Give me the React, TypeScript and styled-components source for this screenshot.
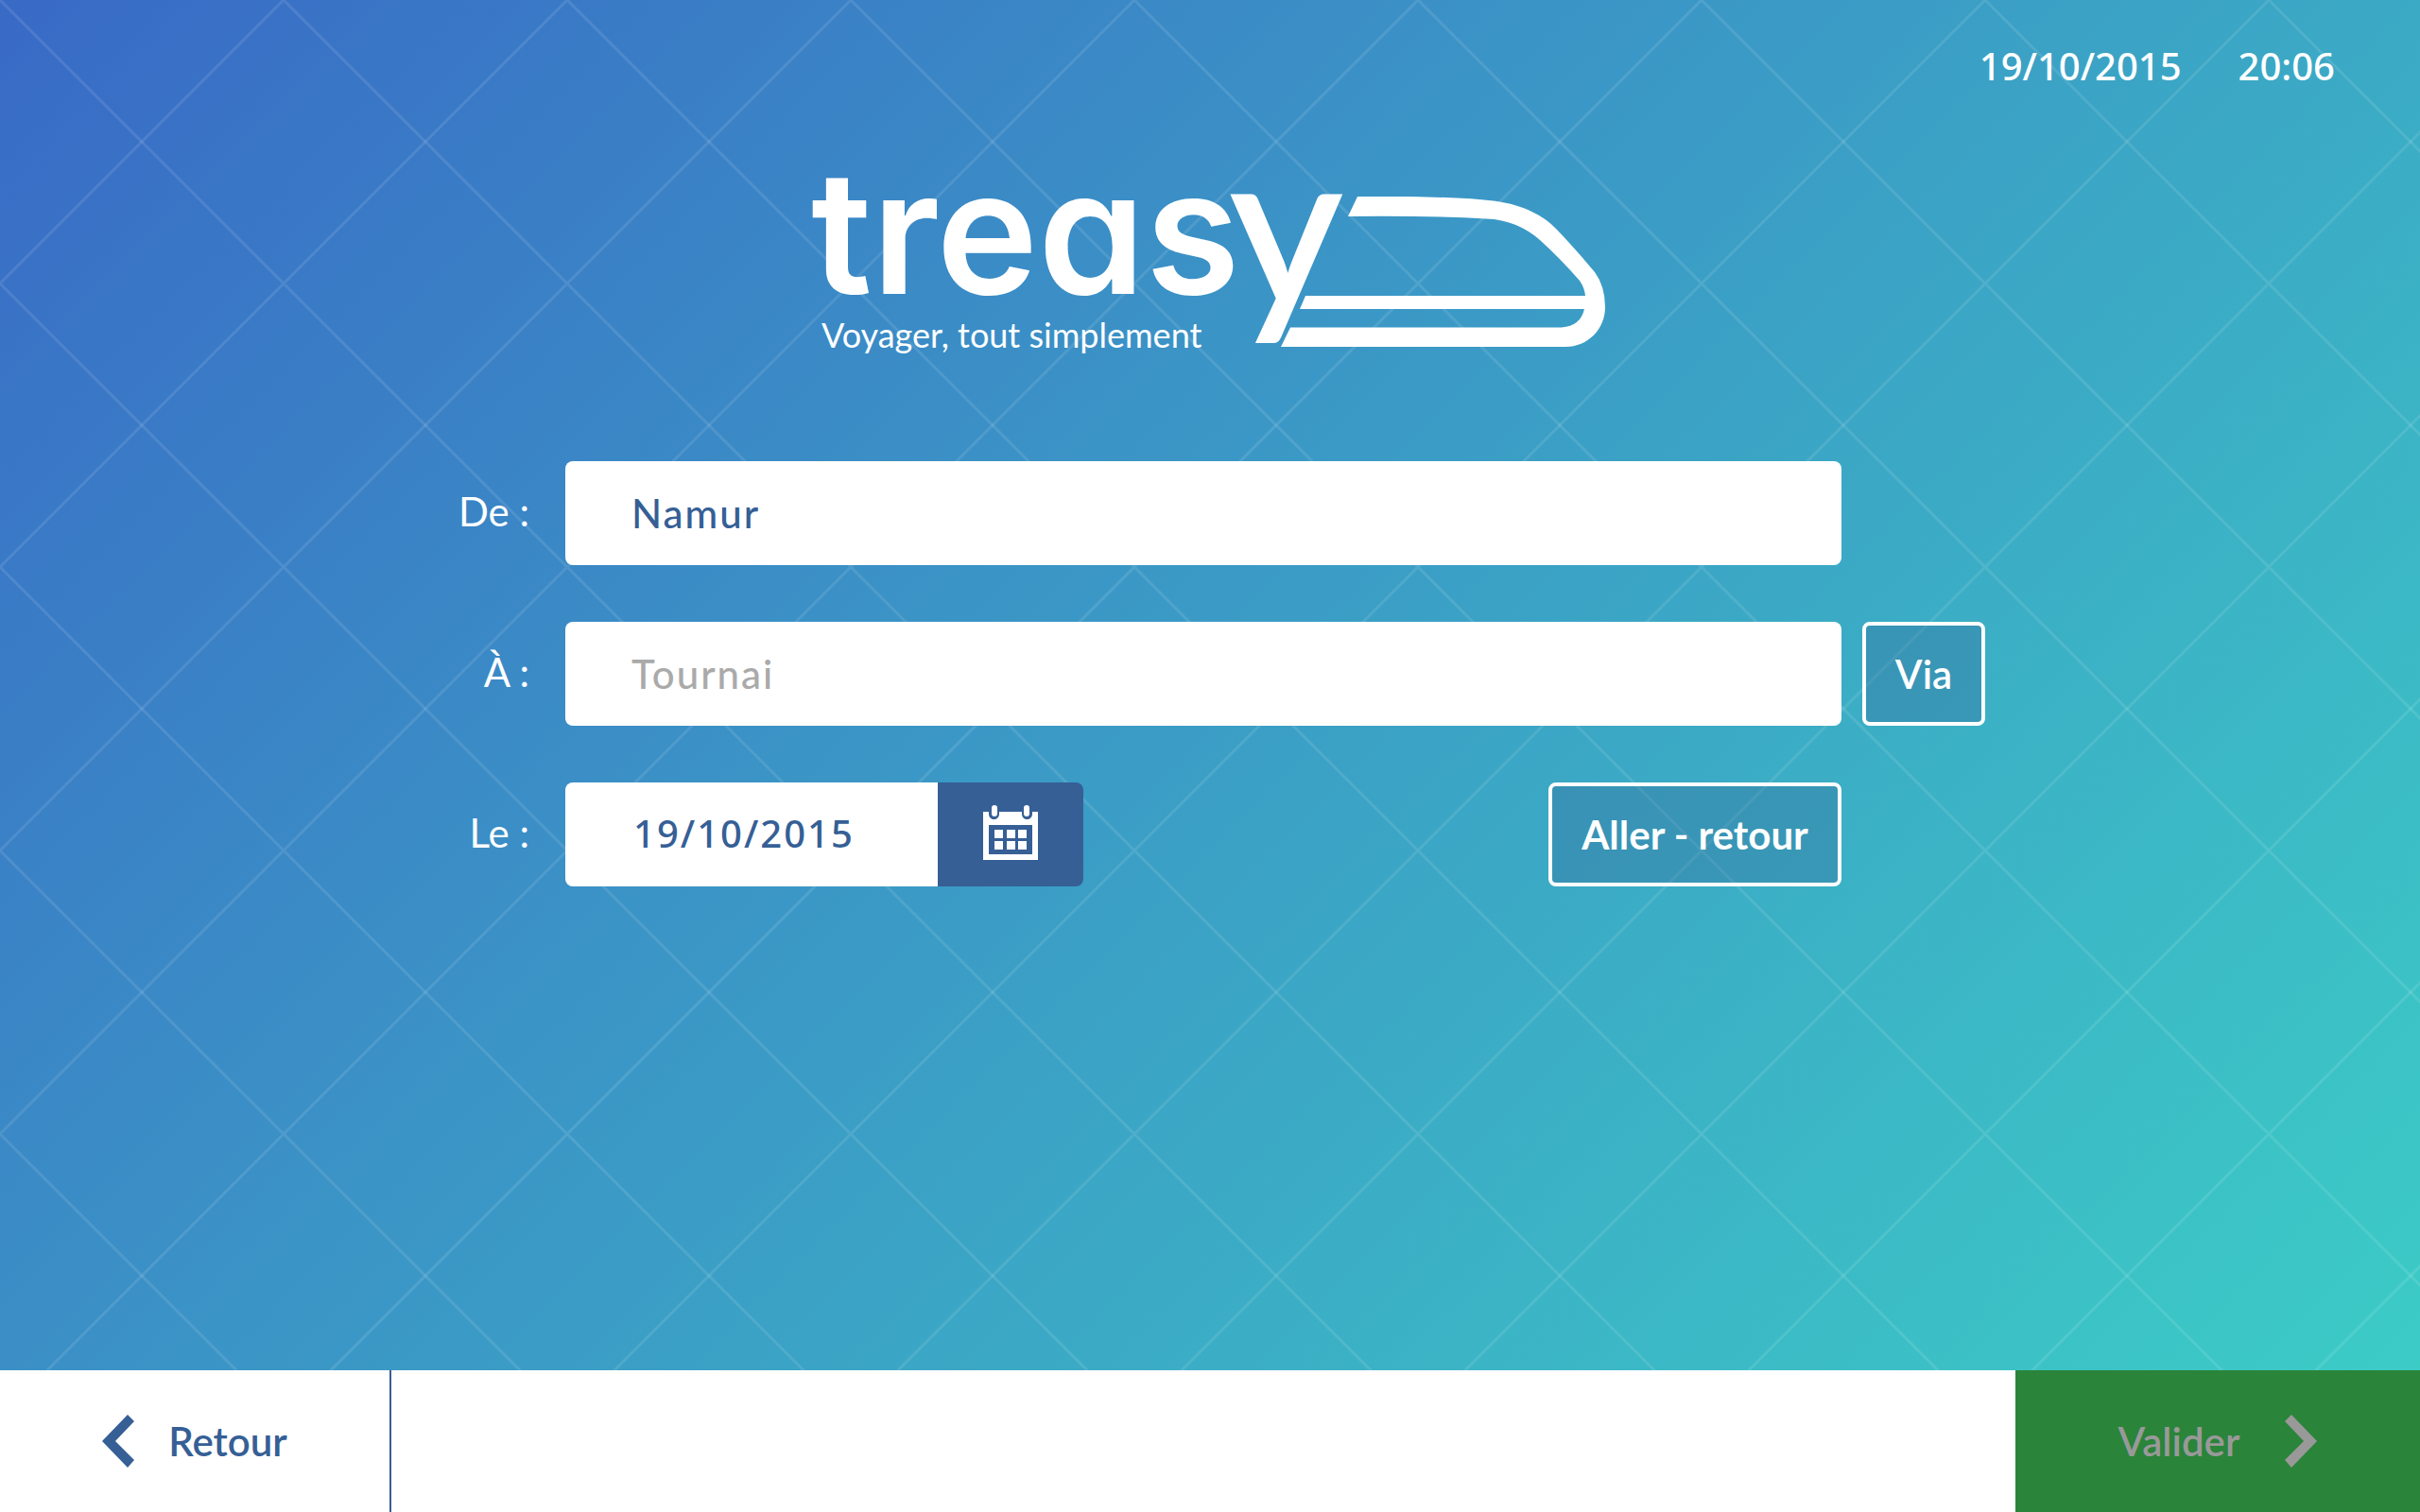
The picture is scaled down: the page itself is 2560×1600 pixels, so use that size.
import React, { useState } from "react";
import styled, { createGlobalStyle } from "styled-components";

const sans = `Lato, "Open Sans", "Liberation Sans", sans-serif`;
const digits = `"Noto Sans", "Open Sans", sans-serif`;
const navy = "#365f96";

const GlobalStyle = createGlobalStyle`
  *, *::before, *::after { box-sizing: border-box; }
  body { margin: 0; font-family: ${sans}; color: #fff; }
  button, input { margin: 0; font: inherit; }
`;

const Screen = styled.div`
  min-height: 100vh;
  display: flex;
  flex-direction: column;
`;

const Stage = styled.main`
  flex: 1;
  background-image:
    linear-gradient(45deg, transparent calc(50% - 2px), rgba(255, 255, 255, 0.1) calc(50% - 1px), rgba(255, 255, 255, 0.1) calc(50% + 1px), transparent calc(50% + 2px)),
    linear-gradient(135deg, transparent calc(50% - 2px), rgba(255, 255, 255, 0.1) calc(50% - 1px), rgba(255, 255, 255, 0.1) calc(50% + 1px), transparent calc(50% + 2px)),
    linear-gradient(135deg, #396ac6, #3b93c6 40%, #3ba6c5 60%, #3cccc6);
  background-size: 300px 300px, 300px 300px, 100% 100%;
`;

const StatusBar = styled.header`
  display: flex;
  justify-content: flex-end;
  gap: 60px;
  padding: 46px 90px 76px;
  font: 500 40px/48px ${digits};
`;

const Brand = styled.h1`
  display: flex;
  justify-content: center;
  margin: 0 0 110px;
  font-size: 36px;
  font-weight: 400;
`;

const LogoDrawing = styled.svg`
  display: block;
  width: 840px;
  height: 208px;
  fill: #fff;
  overflow: visible;
`;

const Wordmark = styled.text`
  font-family: Inter, "Liberation Sans", sans-serif;
  font-size: 182px;
  font-weight: 600;
  font-feature-settings: "cv11";
`;

const WordmarkEnd = styled.tspan`
  font-family: ${sans};
  font-size: 232px;
  font-weight: 600;
`;

const Tagline = styled.text`
  font-family: ${sans};
  font-size: 36px;
`;

const Form = styled.form`
  display: flex;
  flex-direction: column;
  gap: 60px;
`;

const Row = styled.div`
  display: grid;
  grid-template-columns: minmax(140px, 598fr) minmax(0, 1350fr) minmax(152px, 612fr);
  align-items: center;
`;

const Label = styled.label`
  padding: 0 38px 4px 0;
  text-align: right;
  font-size: 42px;
  line-height: 48px;
`;

const Field = styled.input<{ $date?: boolean }>`
  width: ${(p) => (p.$date ? "394px" : "100%")};
  height: 110px;
  padding: ${(p) => (p.$date ? "0 20px 4px 72px" : "0 20px 0 70px")};
  border: 0;
  border-radius: ${(p) => (p.$date ? "8px 0 0 8px" : "8px")};
  background: #fff;
  color: ${navy};
  font-family: ${(p) => (p.$date ? digits : sans)};
  font-size: ${(p) => (p.$date ? "40px" : "42px")};
  font-weight: 500;
  letter-spacing: 2px;
  &::placeholder { color: #aaa; opacity: 1; }
`;

const DateLine = styled.div`
  display: flex;
  justify-content: space-between;
`;

const DateGroup = styled.div`
  display: flex;
`;

const CalendarButton = styled.button`
  display: flex;
  align-items: center;
  justify-content: center;
  width: 154px;
  height: 110px;
  padding: 0 0 4px;
  border: 0;
  border-radius: 0 8px 8px 0;
  background: ${navy};
`;

const OutlineButton = styled.button<{ $width: number; $strong?: boolean }>`
  width: ${(p) => p.$width}px;
  height: 110px;
  padding: 0;
  border: 4px solid #fff;
  border-radius: 8px;
  background: rgba(54, 95, 150, 0.3);
  color: #fff;
  font-size: 42px;
  font-weight: ${(p) => (p.$strong ? 700 : 600)};
`;

const Extra = styled.div`
  padding-left: 22px;
`;

const Footer = styled.footer`
  display: flex;
  justify-content: space-between;
  height: 150px;
  background: #fff;
`;

const NavButton = styled.button<{ $next?: boolean }>`
  display: flex;
  align-items: center;
  justify-content: center;
  gap: ${(p) => (p.$next ? 48 : 36)}px;
  width: ${(p) => (p.$next ? 428 : 414)}px;
  padding: 0;
  border: 0;
  border-right: ${(p) => (p.$next ? "0" : `2px solid ${navy}`)};
  background: ${(p) => (p.$next ? "#2a843a" : "#fff")};
  color: ${(p) => (p.$next ? "#999" : navy)};
  font-size: 42px;
  font-weight: 600;
`;

function Logo() {
  return (
    <LogoDrawing viewBox="0 0 840 208" role="img" aria-label="treasy, Voyager, tout simplement">
      <Wordmark x="-2" y="141">
        treas<WordmarkEnd x="440" y="154">y</WordmarkEnd>
      </Wordmark>
      <Tagline x="9" y="198">Voyager, tout simplement</Tagline>
      <path d="M576 38H632Q690 39 722 42.700C752 47 773 58 787 73Q808 95 827 118Q838 133 838 155C838 178 820 197 796 197H495L505 176.500H792Q812 175 816 157H515L521 143H817Q816 134 811 127Q791 104 769 84C754 71 735 62 712 61.500Q650 58 566 59Z" />
    </LogoDrawing>
  );
}

function CalendarIcon() {
  return (
    <svg width="58" height="58" viewBox="0 0 58 58" fill="#fff" aria-hidden="true">
      <path fillRule="evenodd" d="M0 7H6V9C6 17 17 17 17 9V7H41V9C41 17 52 17 52 9V7H58V58H0ZM6 21V52H52V21Z" />
      <rect x="9" y="0" width="6" height="12" rx="3" />
      <rect x="43" y="0" width="6" height="12" rx="3" />
      <path d="M12 26h9v9h-9zM25 26h9v9h-9zM37 26h9v9h-9zM12 38h9v9h-9zM25 38h9v9h-9zM37 38h9v9h-9z" />
    </svg>
  );
}

function Chevron({ right }: { right?: boolean }) {
  return (
    <svg width="34" height="56" viewBox="0 0 34 56" fill="currentColor" aria-hidden="true">
      <path d={right ? "M7 0L0 7L20 28L0 48L7 56L34 28Z" : "M27 0L34 7L14 28L34 48L27 56L0 28Z"} />
    </svg>
  );
}

export default function App() {
  const [from, setFrom] = useState("Namur");
  const [to, setTo] = useState("");
  const [date, setDate] = useState("19/10/2015");

  return (
    <Screen>
      <GlobalStyle />
      <Stage>
        <StatusBar>
          <time>19/10/2015</time>
          <time>20:06</time>
        </StatusBar>
        <Brand>
          <Logo />
        </Brand>
        <Form id="trip" onSubmit={(e) => e.preventDefault()}>
          <Row>
            <Label htmlFor="from">De :</Label>
            <Field id="from" value={from} onChange={(e) => setFrom(e.target.value)} />
          </Row>
          <Row>
            <Label htmlFor="to">À :</Label>
            <Field id="to" placeholder="Tournai" value={to} onChange={(e) => setTo(e.target.value)} />
            <Extra>
              <OutlineButton type="button" $width={130}>Via</OutlineButton>
            </Extra>
          </Row>
          <Row>
            <Label htmlFor="date">Le :</Label>
            <DateLine>
              <DateGroup>
                <Field id="date" $date value={date} onChange={(e) => setDate(e.target.value)} />
                <CalendarButton type="button" aria-label="Calendrier">
                  <CalendarIcon />
                </CalendarButton>
              </DateGroup>
              <OutlineButton type="button" $width={310} $strong>Aller - retour</OutlineButton>
            </DateLine>
          </Row>
        </Form>
      </Stage>
      <Footer>
        <NavButton type="button">
          <Chevron />
          Retour
        </NavButton>
        <NavButton type="submit" form="trip" disabled $next>
          Valider
          <Chevron right />
        </NavButton>
      </Footer>
    </Screen>
  );
}
